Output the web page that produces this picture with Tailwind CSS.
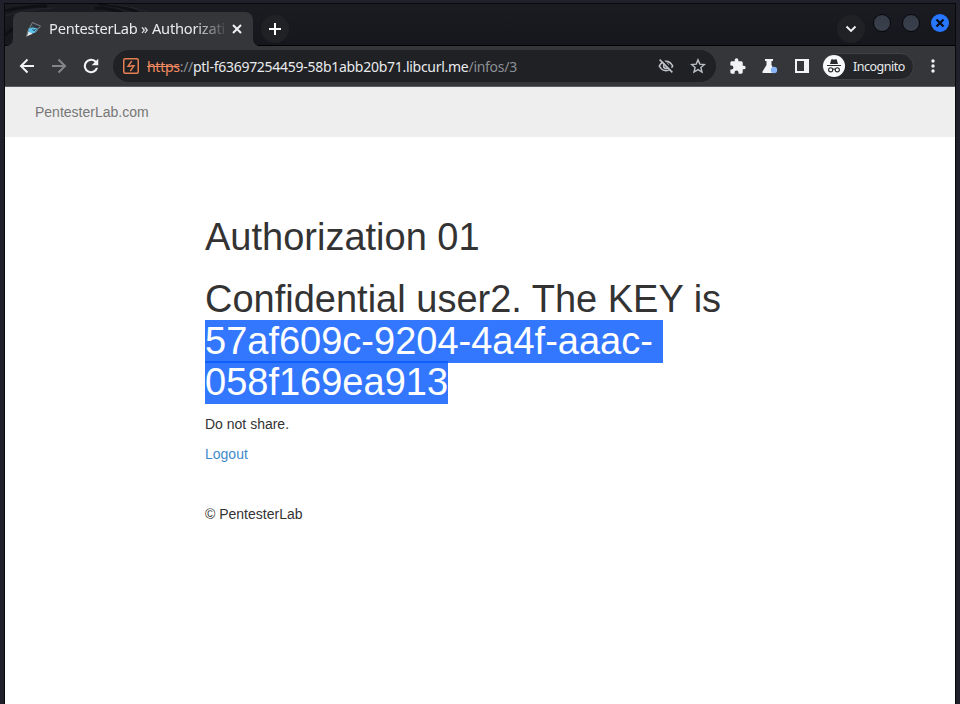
<!DOCTYPE html>
<html lang="en">
<head>
<meta charset="utf-8">
<title>PentesterLab » Authorization 01</title>
<script src="https://cdn.jsdelivr.net/npm/@tailwindcss/browser@4"></script>
</head>
<body class="w-[960px] h-[704px] overflow-hidden bg-[#1f202a]">
<div class="flex flex-col h-[704px] pt-[3px] px-[4px] font-['Noto_Sans',sans-serif]">
  <div class="flex flex-col flex-1 border-t border-x border-[#08090d]">
    <!-- Tab strip -->
    <header class="relative flex h-[42px] shrink-0 bg-linear-to-b from-[#1a1c22] to-[#15171d] border-b border-black">
      <svg class="absolute left-0 top-0" width="150" height="41" viewBox="0 0 150 41" fill="none">
        <path d="M0 7Q20 2 42 2M0 31L9 24M93 0Q114 0 132 8M90 4Q106 4 118 9" stroke="#0e1014" stroke-width="3"/>
        <path d="M0 12Q22 5 49 4M102 0Q125 2 143 8" stroke="#25262c" stroke-width="1"/>
      </svg>
      <div class="relative flex items-center w-[240px] h-[34px] mt-[8px] ml-[8px] pl-[12px] rounded-t-[8px] bg-[#35363a]">
        <svg class="absolute -left-[8px] bottom-0" width="8" height="8"><path d="M8 0V8H0Q8 8 8 0Z" fill="#35363a"/></svg>
        <svg class="absolute -right-[8px] bottom-0" width="8" height="8"><path d="M0 0V8H8Q0 8 0 0Z" fill="#35363a"/></svg>
        <svg width="17" height="17" viewBox="0 0 17 17" fill="none">
          <path d="M7 1.500L15.500 5L10 12.500L1.500 15.500L3.500 8Z" fill="#3c4146"/>
          <path d="M4.500 7L7.500 1.500L15.500 5L10.500 11.500" stroke="#788188" stroke-width="1"/>
          <path d="M3.500 7.500L7.500 6.500L12.500 7.500L9.500 12L3 12Z" fill="#5bc2ec"/>
          <path d="M1.500 15.500L3.500 11L8 12.500Z" fill="#e9edef"/>
          <path d="M3.500 8L1.500 15.500" stroke="#788188"/>
          <path d="M7.500 3.500L10 5.500L13.500 5.500M7.500 8.500L9 9.500L10.500 8.500" stroke="#202b32"/>
        </svg>
        <div class="ml-[7px] -mt-[2px] w-[175px] overflow-hidden whitespace-nowrap text-[14.67px] tracking-[-0.23px] leading-[20px] text-[#e8eaed] mask-r-from-[145px] mask-r-to-[180px]">PentesterLab » Authorizati</div>
        <svg class="ml-[8px]" width="10" height="10" viewBox="0 0 10 10" stroke="#f1f3f4" stroke-width="2"><path d="M1 1L9 9M9 1L1 9"/></svg>
      </div>
      <div class="flex items-center justify-center size-[28px] mt-[11px] ml-[8px] rounded-full bg-[#202124]">
        <svg width="14" height="14" viewBox="0 0 14 14" stroke="#fff" stroke-width="2"><path d="M7 1V13M1 7H13"/></svg>
      </div>
      <div class="flex-1"></div>
      <div class="flex items-center justify-center size-[28px] mt-[11px] rounded-full bg-[#202124]">
        <svg width="12" height="8" viewBox="0 0 12 8" fill="none" stroke="#f1f3f4" stroke-width="1.900"><path d="M1.500 1.500L6 6L10.500 1.500"/></svg>
      </div>
      <div class="size-[18px] mt-[10px] ml-[8px] rounded-full bg-linear-to-b from-[#343c48] to-[#3a404c] border border-[#07080b]"></div>
      <div class="size-[18px] mt-[10px] ml-[11px] rounded-full bg-linear-to-b from-[#343c48] to-[#3a404c] border border-[#07080b]"></div>
      <div class="flex items-center justify-center size-[18px] mt-[10px] ml-[11px] mr-[6px] rounded-full bg-[#2777ff]">
        <svg width="10" height="10" viewBox="0 0 10 10" stroke="#080c14" stroke-width="2.200"><path d="M1.500 1.500L8.500 8.500M8.500 1.500L1.500 8.500"/></svg>
      </div>
    </header>
    <!-- Toolbar -->
    <div class="flex items-center h-[41px] shrink-0 bg-[#35363a] border-b border-[#5b5c60]">
      <svg class="ml-[12px]" width="20" height="20" viewBox="0 0 20 20" fill="none" stroke="#f1f3f4" stroke-width="2"><path d="M17 10H4M10.500 3.500L4 10L10.500 16.500"/></svg>
      <svg class="ml-[12px]" width="20" height="20" viewBox="0 0 20 20" fill="none" stroke="#85868a" stroke-width="2"><path d="M3 10H16M9.500 3.500L16 10L9.500 16.500"/></svg>
      <svg class="ml-[12px]" width="20" height="20" viewBox="0 0 24 24" fill="#f1f3f4"><path d="M18.200 5.800A8.700 8.700 0 1 0 20.500 14.200h-2.600A6.200 6.200 0 1 1 16.400 7.600L12.800 11.200H20.700V3.300z"/></svg>
      <div class="flex items-center h-[32px] w-[603px] ml-[12px] rounded-full bg-[#202124] pl-[10px]">
        <svg width="16" height="16" viewBox="0 0 16 16" fill="none" stroke="#e57f52"><rect x=".75" y=".75" width="14.500" height="14.500" rx="1.500" stroke-width="1.500"/><path d="M8.700 3L5 8.300H8M8 7.700H11L7.300 13" stroke-width="1.400"/></svg>
        <div class="ml-[8px] mt-[2px] w-[371px] whitespace-nowrap text-[14px] tracking-[-0.28px] leading-[20px] text-[#8b9096]"><span class="line-through text-[#f28b61]">https</span>://<span class="text-[#e8eaed]">ptl-f63697254459-58b1abb20b71.libcurl.me</span>/infos/3</div>
        <svg class="ml-[140px]" width="16" height="16" viewBox="0 0 24 24" fill="none" stroke="#bdc1c6" stroke-width="2.500"><path d="M2 12Q5.500 5 12 5T22 12Q18.500 19 12 19T2 12Z"/><circle cx="12" cy="12" r="3.500"/><path d="M4.500 1L23 19.500" stroke="#202124" stroke-width="3"/><path d="M2.500 2.500L21.500 21.500"/></svg>
        <svg class="ml-[16px]" width="16" height="16" viewBox="0 0 16 16" fill="none" stroke="#bdc1c6" stroke-width="1.400"><path d="M8 1.900L9.800 6.100L14.400 6.500L10.900 9.500L12 14L8 11.600L4 14L5.100 9.500L1.600 6.500L6.200 6.100Z"/></svg>
      </div>
      <svg class="ml-[14px]" width="16" height="16" viewBox="1.500 .5 22 22" fill="#f1f3f4"><path d="M20.500 11H19V7c0-1.100-.9-2-2-2h-4V3.500C13 2.100 11.900 1 10.500 1S8 2.100 8 3.500V5H4c-1.100 0-2 .9-2 2v3.800h1.500c1.500 0 2.700 1.200 2.700 2.700S5 16.200 3.500 16.200H2V20c0 1.100.9 2 2 2h3.800v-1.500c0-1.500 1.200-2.700 2.700-2.700s2.700 1.200 2.700 2.700V22H17c1.100 0 2-.9 2-2v-4h1.500c1.400 0 2.500-1.100 2.500-2.500S21.900 11 20.500 11z"/></svg>
      <svg class="ml-[15px]" width="18" height="18" viewBox="0 0 18 18"><path d="M4 2H12V4H10.500V8L14 14.500Q14.300 16 13 16H2.500Q1 16 1.500 14.500L5.500 8V4H4Z" fill="#f1f3f4"/><circle cx="13" cy="13" r="3.200" fill="#8ab4f8"/></svg>
      <svg class="ml-[16px]" width="14" height="14" viewBox="0 0 14 14"><path d="M0 0H14V14H0ZM2 2V12H9V2Z" fill="#f1f3f4" fill-rule="evenodd"/></svg>
      <div class="flex items-center h-[27px] w-[92px] ml-[13px] rounded-full bg-[#242529] border border-[#414247]">
        <svg width="22" height="22" viewBox="0 0 22 22" fill="none"><circle cx="11" cy="11" r="11" fill="#f8f9fa"/><path d="M7 9L8.300 4.500Q8.600 4 9.500 4.300Q11 5 12.500 4.300Q13.400 4 13.700 4.500L15 9Z" fill="#292a2d"/><path d="M4 10.500H18M9.500 14.500Q11 13.500 12.500 14.500" stroke="#292a2d" stroke-width="1.200"/><circle cx="7.700" cy="14.800" r="2.100" stroke="#292a2d" stroke-width="1.100"/><circle cx="14.300" cy="14.800" r="2.100" stroke="#292a2d" stroke-width="1.100"/></svg>
        <span class="ml-[8px] mt-[2px] text-[12.500px] tracking-[-0.48px] leading-[18px] text-[#e8eaed]">Incognito</span>
      </div>
      <svg class="ml-[17px]" width="4" height="14" viewBox="0 0 4 14" fill="#f1f3f4"><circle cx="2" cy="2" r="1.700"/><circle cx="2" cy="7" r="1.700"/><circle cx="2" cy="12" r="1.700"/></svg>
    </div>
    <!-- Page -->
    <div class="flex-1 bg-white font-['Liberation_Sans',Arial,sans-serif] text-[14px] leading-[20px] text-[#333]">
      <nav class="flex items-center h-[50px] pl-[30px] bg-[#eee] text-[#777]">PentesterLab.com</nav>
      <main class="ml-[200px] w-[550px] pt-[80px]">
        <h1 class="text-[38px] leading-[41.800px]">Authorization 01</h1>
        <h1 class="mt-[20px] text-[38px] leading-[41.800px]">Confidential user2. The KEY is<br><span class="bg-[#3377ff] text-white whitespace-pre pb-px">57af609c-9204-4a4f-aaac- <br></span><span class="bg-linear-to-b from-[#0f60fb] from-[2px] to-[#3377ff] to-[2px] text-white pb-px">058f169ea913</span></h1>
        <p class="mt-[9.600px]">Do not share.</p>
        <p class="mt-[10px] text-[#428bca]">Logout</p>
        <p class="mt-[40px]">© PentesterLab</p>
      </main>
    </div>
  </div>
</div>
</body>
</html>
